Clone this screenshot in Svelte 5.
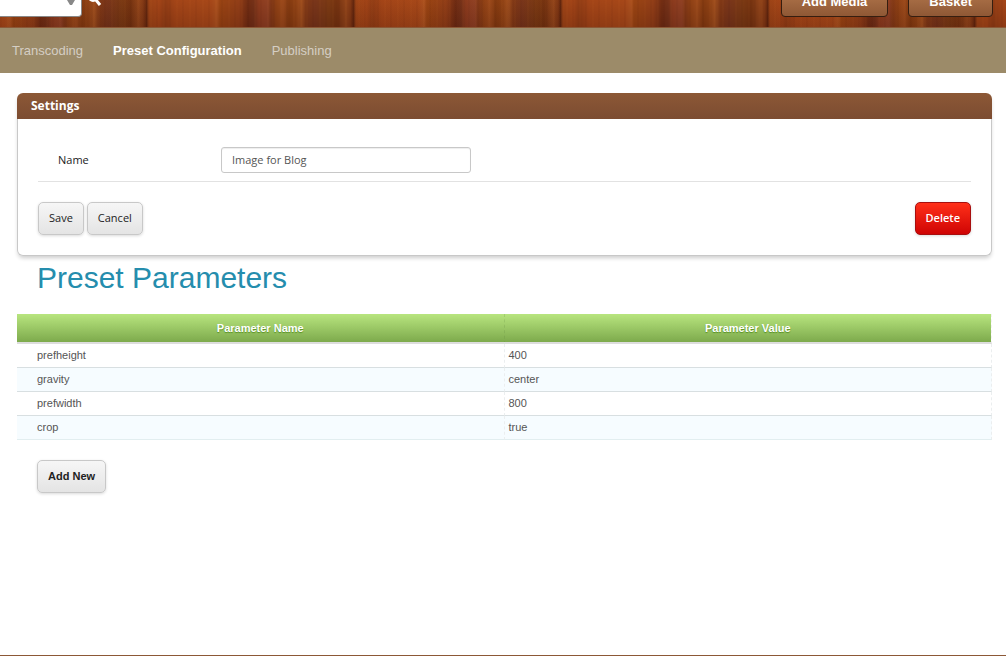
<script>
  const tabs = ['Transcoding', 'Preset Configuration', 'Publishing'];
  const active = 'Preset Configuration';
  const parameters = [
    { name: 'prefheight', value: '400' },
    { name: 'gravity', value: 'center' },
    { name: 'prefwidth', value: '800' },
    { name: 'crop', value: 'true' }
  ];
  let presetName = $state('Image for Blog');
</script>

<header>
  <div class="search">
    <div class="scope">
      <select aria-label="Search scope"></select>
      <svg width="8" height="5" viewBox="0 0 8 5"><path d="M0 0H8L5 5H3Z" fill="#888" /></svg>
    </div>
    <button class="find" aria-label="Search">
      <svg width="16" height="16" viewBox="0 0 16 16" fill="none" stroke="#fff">
        <circle cx="6" cy="6" r="4" stroke-width="2" />
        <path d="M9 9 L13 14" stroke-width="3" />
      </svg>
    </button>
  </div>
  <div class="actions">
    <button class="brown">Add Media</button>
    <button class="brown">Basket</button>
  </div>
</header>

<nav>
  {#each tabs as tab}
    <a href="#top" class:active={tab === active}>{tab}</a>
  {/each}
</nav>

<main>
  <section class="panel">
    <h2>Settings</h2>
    <form onsubmit={(e) => e.preventDefault()}>
      <div class="field">
        <label for="preset-name">Name</label>
        <input id="preset-name" type="text" bind:value={presetName} />
      </div>
      <div class="buttons">
        <button class="btn">Save</button>
        <button class="btn" type="button">Cancel</button>
        <button class="btn delete" type="button">Delete</button>
      </div>
    </form>
  </section>

  <h1>Preset Parameters</h1>

  <table>
    <thead>
      <tr><th>Parameter Name</th><th>Parameter Value</th></tr>
    </thead>
    <tbody>
      {#each parameters as row}
        <tr><td>{row.name}</td><td>{row.value}</td></tr>
      {/each}
    </tbody>
  </table>

  <button class="btn add">Add New</button>
</main>

<footer></footer>

<style>
  :global(body) {
    margin: 0;
    background: #fff;
  }
  :global(#app) {
    min-height: 100vh;
    display: flex;
    flex-direction: column;
    font-family: "Liberation Sans", Arial, sans-serif;
    font-size: 11px;
    color: #555;
  }
  button, input, select {
    font: inherit;
    margin: 0;
    box-sizing: border-box;
  }
  header {
    height: 27px;
    overflow: hidden;
    display: flex;
    justify-content: space-between;
    align-items: flex-end;
    border-bottom: 1px solid #8c5836;
    background:
      linear-gradient(rgba(255, 120, 40, 0.04), rgba(30, 0, 0, 0.14)),
      repeating-linear-gradient(90deg, rgba(40, 0, 0, 0.04) 0 2px, transparent 2px 7px, rgba(255, 150, 60, 0.03) 7px 9px, transparent 9px 13px),
      linear-gradient(90deg,
        #6a2c10 0, #9a4216 2px, #a04317 12px, #8d3a14 18px, #a04317 28px,
        #a34618 64px, #a9501f 70px, #964212 73px, #8e3c17 92px, #6c2a12 101px,
        #702f18 107px, #88391d 112px, #8c3f24 121px, #7c3516 124px,
        #8c3f14 130px, #98481b 136px, #80380f 142px, #8c4014 149px,
        #a0501f 154px, #7c3615 159px, #74331a 168px, #773813 182px,
        #70300f 190px, #8e431a 199px, #7c3513 204px, #5a220d 207px);
    background-size: auto, auto, 207px 100%;
    background-position: 0 0, 0 0, 147px 0;
  }
  .search, .actions {
    display: flex;
    align-items: flex-end;
  }
  .scope {
    display: grid;
    align-items: end;
    margin-bottom: 10px;
  }
  .scope > * {
    grid-area: 1 / 1;
  }
  .scope svg {
    justify-self: end;
    margin: 0 7px 12px 0;
  }
  .search select {
    width: 82px;
    height: 30px;
    border: 1px solid #888;
    border-left: 0;
    border-radius: 0 0 4px 0;
    appearance: none;
    background: #fff;
  }
  .find {
    padding: 0;
    margin: 0 0 20px 5px;
    border: 0;
    background: none;
    line-height: 0;
  }
  .actions {
    gap: 20px;
    padding: 0 13px 10px 0;
  }
  .brown {
    height: 32px;
    padding: 0 20px;
    border: 1px solid #351e10;
    border-radius: 4px;
    background: linear-gradient(#b87c50, #8f5835);
    color: #fff;
    font-size: 13px;
    font-weight: bold;
  }
  nav {
    display: flex;
    gap: 30px;
    height: 45px;
    padding: 0 12px;
    align-items: center;
    background: #9c8b69;
    font-size: 13px;
  }
  nav a {
    color: #d5cec4;
    text-decoration: none;
  }
  nav .active {
    color: #fff;
    font-weight: bold;
  }
  main {
    flex: 1;
    padding: 20px 14px 0 17px;
  }
  .panel {
    border-radius: 6px;
    box-shadow: 0 3px 4px -1px rgba(0, 0, 0, 0.2);
    font-family: "Open Sans", sans-serif;
  }
  h2 {
    margin: 0;
    padding: 0 14px;
    border-radius: 6px 6px 0 0;
    background: linear-gradient(#8c5836, #7c4c31);
    color: #fff;
    font-size: 12px;
    line-height: 26px;
    font-weight: bold;
  }
  form {
    padding: 28px 20px 20px;
    border: 1px solid #c8c8c8;
    border-top: 0;
    border-radius: 0 0 6px 6px;
  }
  .field {
    display: flex;
    align-items: center;
    padding: 0 0 8px 20px;
    border-bottom: 1px solid #e2e2e2;
  }
  label {
    width: 163px;
    padding-bottom: 2px;
    color: #222;
  }
  input {
    width: 250px;
    height: 26px;
    padding: 0 10px 2px;
    border: 1px solid #c8c8c8;
    border-radius: 3px;
    box-shadow: inset 0 1px 1px rgba(0, 0, 0, 0.07);
    color: #555;
  }
  .buttons {
    display: flex;
    gap: 3px;
    padding-top: 20px;
  }
  .btn {
    height: 33px;
    padding: 0 10px 2px;
    border: 1px solid #c8c8c8;
    border-radius: 5px;
    background: linear-gradient(#f6f6f6, #e4e4e4);
    box-shadow: 0 1px 3px rgba(0, 0, 0, 0.15);
    color: #222;
  }
  .delete {
    margin-left: auto;
    border-color: #a80f0f;
    background: linear-gradient(#ff3019, #cf0404);
    color: #fff;
    font-weight: 600;
  }
  h1 {
    margin: 4px 20px 18px;
    color: #258dad;
    font-size: 30px;
    line-height: 36px;
    font-weight: normal;
  }
  table {
    width: 100%;
    table-layout: fixed;
    border-collapse: separate;
    border-spacing: 0;
  }
  th {
    height: 28px;
    padding: 0;
    border-bottom: 2px solid #ddd;
    border-right: 1px dashed rgba(90, 130, 60, 0.2);
    background: linear-gradient(#b8e57f, #7daa4c);
    color: #fff;
    text-shadow: 0 1px 1px #568f23;
  }
  th:last-child {
    border-right-color: #f2f2f2;
    background-clip: padding-box;
  }
  td {
    height: 21px;
    padding: 0 4px 2px;
    border-bottom: 1px solid #d8dfe1;
    border-right: 1px dashed #ebeeef;
  }
  td:first-child {
    padding-left: 20px;
  }
  tbody tr:nth-child(even) {
    background: #f6fcff;
  }
  tbody tr:last-child td {
    border-bottom-color: #e2eef0;
  }
  .add {
    margin: 20px;
    font-weight: bold;
  }
  footer {
    height: 4px;
    border-top: 1px solid #8c5836;
  }
</style>
